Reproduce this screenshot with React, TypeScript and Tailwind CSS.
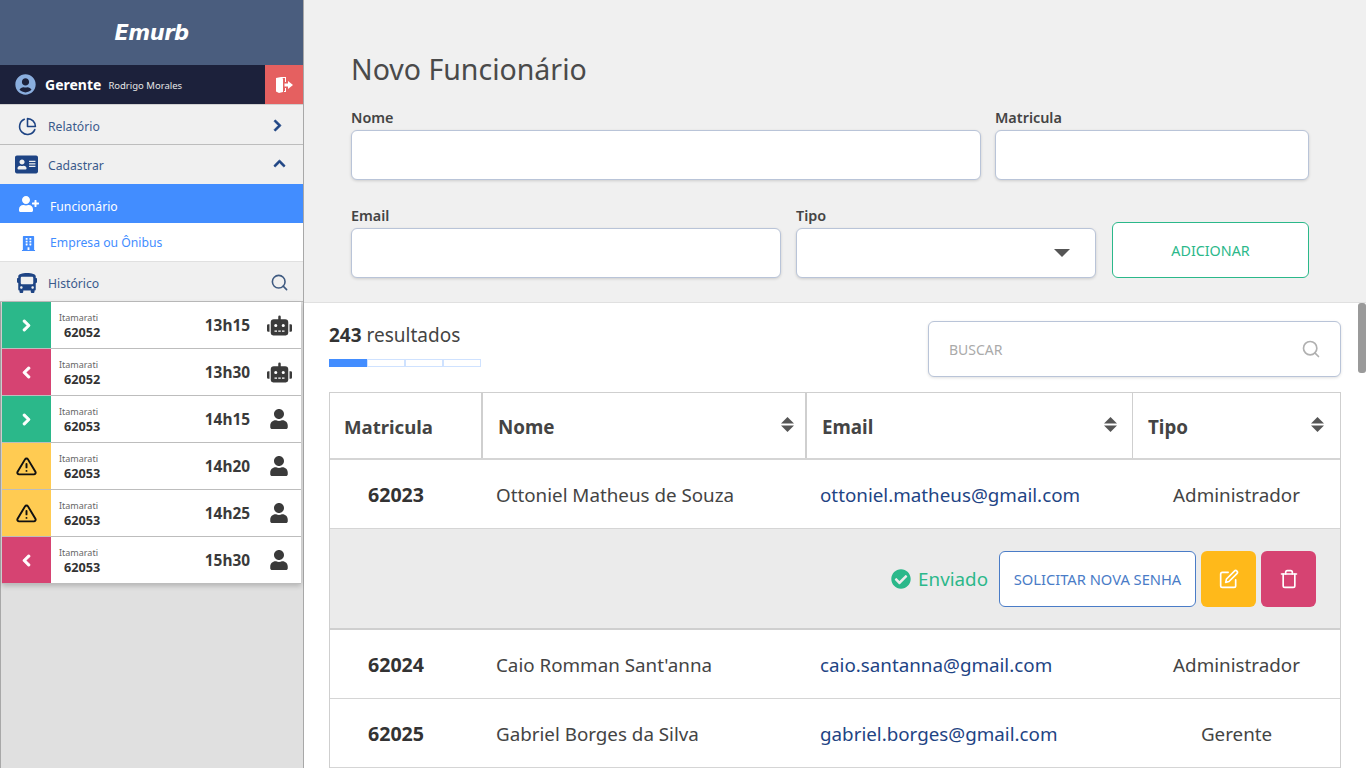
import { FaAddressCard, FaBuilding, FaBus, FaCheckCircle, FaChevronLeft, FaChevronRight, FaChevronUp, FaRobot, FaUser, FaUserCircle, FaUserPlus } from 'react-icons/fa';
import { FiAlertTriangle, FiEdit, FiPieChart, FiSearch, FiTrash } from 'react-icons/fi';

type Kind = 'in' | 'out' | 'warn';

const viagens: { kind: Kind; linha: string; numero: string; hora: string; robo?: boolean }[] = [
  { kind: 'in', linha: 'Itamarati', numero: '62052', hora: '13h15', robo: true },
  { kind: 'out', linha: 'Itamarati', numero: '62052', hora: '13h30', robo: true },
  { kind: 'in', linha: 'Itamarati', numero: '62053', hora: '14h15' },
  { kind: 'warn', linha: 'Itamarati', numero: '62053', hora: '14h20' },
  { kind: 'warn', linha: 'Itamarati', numero: '62053', hora: '14h25' },
  { kind: 'out', linha: 'Itamarati', numero: '62053', hora: '15h30' },
];

const kindBg: Record<Kind, string> = {
  in: 'bg-[#2bb88a]',
  out: 'bg-[#d64372]',
  warn: 'bg-[#ffcb52]',
};

function ViagemRow({ v }: { v: (typeof viagens)[number] }) {
  return (
    <div className="flex h-[47px] shrink-0 items-stretch border-b border-[#bdbdbd] bg-white">
      <div className={`flex w-[49px] shrink-0 items-center justify-center ${kindBg[v.kind]}`}>
        {v.kind === 'in' && <FaChevronRight size={13} stroke="currentColor" strokeWidth={40} className="text-white" />}
        {v.kind === 'out' && <FaChevronLeft size={13} stroke="currentColor" strokeWidth={40} className="text-white" />}
        {v.kind === 'warn' && <FiAlertTriangle size={21} strokeWidth={2.2} className="text-[#111]" />}
      </div>
      <div className="flex w-[50px] flex-col pl-2 pt-[9px]">
        <span className="text-[9px] leading-[13px] whitespace-nowrap text-[#666]">{v.linha}</span>
        <span className="pl-[5px] text-[12.7px] leading-[16px] font-bold text-[#333]">{v.numero}</span>
      </div>
      <div className="flex flex-1 items-center justify-end pr-[9px]">
        <span className="mr-[16px] mt-[1px] text-[15.4px] font-bold text-[#3a3a3a]">{v.hora}</span>
        <div className="flex w-[26px] justify-center">
          {v.robo ? <FaRobot size={25} className="text-[#3a3a3a]" /> : <FaUser size={20} className="text-[#3a3a3a]" />}
        </div>
      </div>
    </div>
  );
}

function Sidebar() {
  return (
    <aside className="flex h-full w-[304px] shrink-0 flex-col border-r border-[#a8a8a8] bg-[#e0e0e0]">
      <div className="flex h-[65px] items-center justify-center bg-[#4a5d7e]">
        <span className="mt-[2px] text-[21px] font-bold italic text-white" style={{ fontFamily: '"DejaVu Sans", sans-serif', letterSpacing: '-0.5px' }}>Emurb</span>
      </div>
      <div className="flex h-[40px] items-stretch border-b border-[#d0d0d0] bg-[#1c213b]">
        <div className="flex flex-1 items-center pl-[15px]">
          <FaUserCircle size={21} className="text-[#8aaede]" />
          <span className="mb-[1px] ml-[9px] text-[14px] font-bold text-white">Gerente</span>
          <span className="ml-[7px] mt-[3px] text-[9.5px] text-[#e6e6e6]">Rodrigo Morales</span>
        </div>
        <div className="flex w-[38px] items-center justify-center bg-[#e56060]">
          <svg width="17" height="16" viewBox="0 0 17 16" fill="white">
            <path d="M0 1L5 0h5v5H9V1H6.5L7 2v13L3 16 0 14.5z" />
            <path d="M9 11h1v4H8v-1h1z" />
            <path d="M8.5 6.6H12V4l5 4-5 4V9.4H8.5z" />
          </svg>
        </div>
      </div>
      <div className="flex h-[40px] items-center border-b border-[#bdbdbd] bg-[#f0f0f0] pl-[18px] pr-[19px] pt-[4px]">
        <FiPieChart size={19} className="text-[#1e4484]" />
        <span className="ml-[11px] mt-[1px] flex-1 text-[12.2px] text-[#3a5a8c]">Relatório</span>
        <FaChevronRight size={13} stroke="currentColor" strokeWidth={30} className="mb-[2px] text-[#1e4484]" />
      </div>
      <div className="flex h-[39px] items-center bg-[#f0f0f0] pl-[15px] pr-[17px] pt-[4px]">
        <FaAddressCard size={23} className="mb-[4px] text-[#1e4484]" />
        <span className="ml-[10px] flex-1 text-[12.2px] text-[#3a5a8c]">Cadastrar</span>
        <FaChevronUp size={13} stroke="currentColor" strokeWidth={30} className="mb-[6px] text-[#1e4484]" />
      </div>
      <div className="flex h-[39px] items-center bg-[#428dff] pl-[19px]">
        <FaUserPlus size={20} className="text-white" />
        <span className="ml-[11px] mt-[7px] text-[12.2px] text-white">Funcionário</span>
      </div>
      <div className="flex h-[39px] items-center border-b border-[#e0e0e0] bg-white pl-[21px]">
        <FaBuilding size={15} className="mt-[2px] text-[#428dff]" />
        <span className="ml-[14px] mt-[3px] text-[12.2px] text-[#428dff]">Empresa ou Ônibus</span>
      </div>
      <div className="flex h-[40px] items-center border-b border-[#bdbdbd] bg-[#f0f0f0] pl-[17px] pr-[14px] pt-[2px]">
        <FaBus size={20} className="text-[#1e4484]" />
        <span className="ml-[11px] mt-[3px] flex-1 text-[12.2px] text-[#3a5a8c]">Histórico</span>
        <FiSearch size={19} className="text-[#3f5a80]" />
      </div>
      <div className="flex-1 border-l border-[#a8a8a8] pl-px pr-[2px]">
        <div className="flex flex-col shadow-[0_2px_5px_rgba(0,0,0,0.2)]">
          {viagens.map((v, i) => (
            <ViagemRow key={i} v={v} />
          ))}
        </div>
      </div>
    </aside>
  );
}

function Field({ label, className, select }: { label: string; className: string; select?: boolean }) {
  return (
    <div className={className}>
      <label className="mb-[2px] block h-[21px] text-[14.4px] leading-[21px] font-semibold text-[#444]">{label}</label>
      <div className="flex h-[50px] items-center justify-end rounded-[6px] border border-[#b9c4d8] bg-white pr-[25px] shadow-[0_1px_3px_rgba(0,0,0,0.15)]">
        {select && <div className="h-0 w-0 border-x-[8px] border-t-[8px] border-x-transparent border-t-[#555]" />}
      </div>
    </div>
  );
}

const cols = 'grid grid-cols-[153px_324px_326px_207px]';

function SortIcon() {
  return (
    <svg width="13" height="15" viewBox="0 0 13 15" fill="#555" className="mt-[-2px] shrink-0">
      <path d="M6.5 0L13 6.6H0z" />
      <path d="M0 8.4h13L6.5 15z" />
    </svg>
  );
}

function SortHead({ label, className }: { label: string; className: string }) {
  return (
    <div className={`flex items-center justify-between pl-[15px] ${className}`}>
      <span className="mt-[3px] text-[18.8px] font-bold text-[#444]">{label}</span>
      <SortIcon />
    </div>
  );
}

function Row({ id, nome, email, tipo, h }: { id: string; nome: string; email: string; tipo: string; h: string }) {
  return (
    <div className={`${cols} ${h} items-center border-b border-[#d5d5d5] pt-[2px]`}>
      <span className="pl-[38px] text-[19.6px] font-bold text-[#333]">{id}</span>
      <span className="pl-[13px] text-[18.8px] text-[#444]">{nome}</span>
      <span className="pl-[13px] text-[18.8px] text-[#1e4484]">{email}</span>
      <span className="text-center text-[18.8px] text-[#444]">{tipo}</span>
    </div>
  );
}

export default function App() {
  return (
    <div className="flex h-[768px] w-[1366px] overflow-hidden bg-[#f0f0f0]" style={{ fontFamily: '"Noto Sans", sans-serif' }}>
      <Sidebar />
      <main className="flex min-w-0 flex-1 flex-col">
        <section className="h-[302px] shrink-0 pl-[47px] pr-[57px] pt-[49px]">
          <h1 className="h-[58px] text-[28.5px] leading-[40px] text-[#4a4a4a]">Novo Funcionário</h1>
          <div className="flex gap-[14px]">
            <Field label="Nome" className="w-[630px]" />
            <Field label="Matricula" className="w-[314px]" />
          </div>
          <div className="mt-[25px] flex items-end">
            <Field label="Email" className="w-[430px]" />
            <Field label="Tipo" className="ml-[15px] w-[300px]" select />
            <button className="ml-[16px] h-[56px] w-[197px] rounded-[6px] border border-[#2bb88a] bg-white pt-[1px] text-[14.3px] text-[#2bb88a]">ADICIONAR</button>
          </div>
        </section>
        <section className="relative min-h-0 flex-1 overflow-hidden border-t border-[#e0e0e0] bg-white pl-[25px] pr-[25px]">
          <div className="absolute right-0 top-0 h-[70px] w-[8px] rounded-[3px] bg-[#9a9a9a]" />
          <div className="flex h-[89px] justify-between pt-[18px]">
            <div>
              <div className="text-[19px] leading-[28px] text-[#444]">
                <span className="font-bold text-[#333]">243</span> resultados
              </div>
              <div className="mt-[10px] flex h-[8px] w-[152px]">
                <div className="w-[38px] bg-[#428dff]" />
                <div className="w-[38px] border border-[#cfe2ff]" />
                <div className="w-[38px] border border-[#cfe2ff]" />
                <div className="w-[38px] border border-[#cfe2ff]" />
              </div>
            </div>
            <div className="flex h-[56px] w-[413px] items-center justify-between rounded-[6px] border border-[#b9c4d8] bg-white pl-[20px] pr-[19px] shadow-[0_1px_3px_rgba(0,0,0,0.12)]">
              <span className="text-[14px] text-[#aaa]">BUSCAR</span>
              <FiSearch size={20} className="text-[#b0b0b0]" />
            </div>
          </div>
          <div className="w-[1012px] border-x border-t border-[#cfcfcf]">
            <div className={`${cols} h-[67px] border-b-2 border-[#d5d5d5]`}>
              <div className="flex items-center border-r-2 border-[#cfcfcf] pl-[14px]">
                <span className="mt-[2px] text-[18.6px] font-bold text-[#444]">Matricula</span>
              </div>
              <SortHead label="Nome" className="border-r-2 border-[#cfcfcf] pr-[11px]" />
              <SortHead label="Email" className="border-r border-[#cfcfcf] pr-[15px]" />
              <SortHead label="Tipo" className="pr-[16px]" />
            </div>
            <Row id="62023" nome="Ottoniel Matheus de Souza" email="ottoniel.matheus@gmail.com" tipo="Administrador" h="h-[69px]" />
            <div className="flex h-[101px] items-center justify-end border-b-2 border-[#cfcfcf] bg-[#ebebeb] pr-[24px]">
              <FaCheckCircle size={20} className="text-[#2bb88a]" />
              <span className="ml-[7px] mt-[2px] text-[18.8px] text-[#2bb88a]">Enviado</span>
              <button className="ml-[11px] h-[56px] w-[197px] rounded-[6px] border border-[#4a7cc7] bg-white pt-[1px] text-[14.7px] text-[#4a7cc7]">SOLICITAR NOVA SENHA</button>
              <button className="ml-[5px] flex h-[56px] w-[55px] items-center justify-center rounded-[6px] bg-[#ffb91a]">
                <FiEdit size={20} className="text-white" />
              </button>
              <button className="ml-[5px] flex h-[56px] w-[55px] items-center justify-center rounded-[6px] bg-[#d64372]">
                <FiTrash size={20} className="text-white" />
              </button>
            </div>
            <Row id="62024" nome="Caio Romman Sant'anna" email="caio.santanna@gmail.com" tipo="Administrador" h="h-[69px]" />
            <Row id="62025" nome="Gabriel Borges da Silva" email="gabriel.borges@gmail.com" tipo="Gerente" h="h-[69px]" />
          </div>
        </section>
      </main>
    </div>
  );
}
